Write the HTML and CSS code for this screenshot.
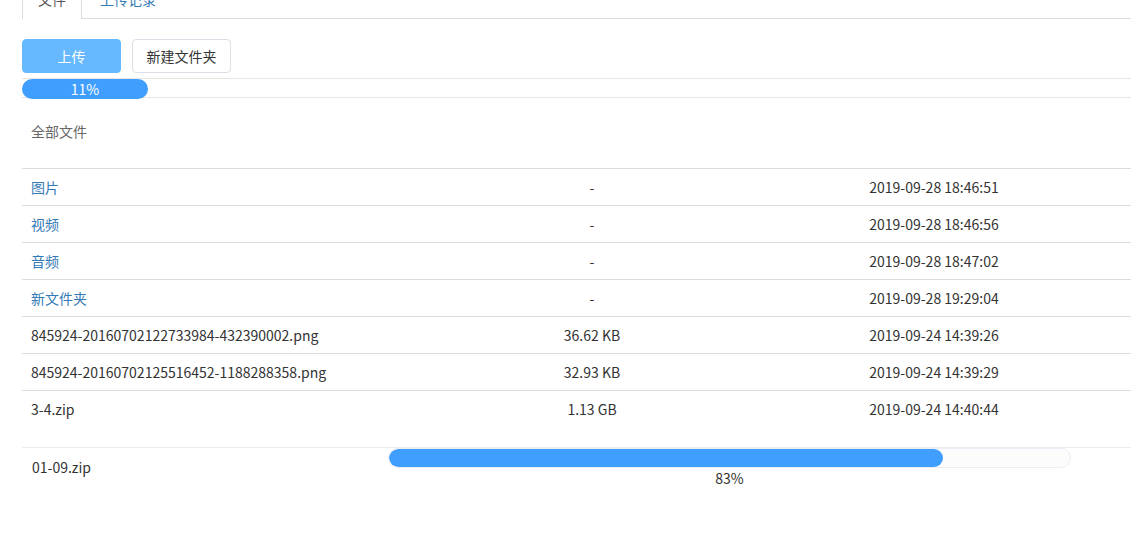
FILE: index.html
```html
<!DOCTYPE html>
<html lang="zh">
<head>
<meta charset="utf-8">
<link rel="stylesheet" href="styles.css">
</head>
<body>
<div class="page">
  <div class="tabs">
    <div class="tab active">文件</div>
    <div class="tab">上传记录</div>
  </div>
  <div class="toolbar">
    <button class="btn primary">上传</button>
    <button class="btn">新建文件夹</button>
  </div>
  <div class="total-progress">
    <div class="total-fill" style="width:126px">11%</div>
  </div>
  <div class="crumb">全部文件</div>
  <div class="list">
    <div class="row"><span class="name folder">图片</span><span class="size">-</span><span class="date">2019-09-28 18:46:51</span></div>
    <div class="row"><span class="name folder">视频</span><span class="size">-</span><span class="date">2019-09-28 18:46:56</span></div>
    <div class="row"><span class="name folder">音频</span><span class="size">-</span><span class="date">2019-09-28 18:47:02</span></div>
    <div class="row"><span class="name folder">新文件夹</span><span class="size">-</span><span class="date">2019-09-28 19:29:04</span></div>
    <div class="row"><span class="name">845924-20160702122733984-432390002.png</span><span class="size">36.62 KB</span><span class="date">2019-09-24 14:39:26</span></div>
    <div class="row"><span class="name">845924-20160702125516452-1188288358.png</span><span class="size">32.93 KB</span><span class="date">2019-09-24 14:39:29</span></div>
    <div class="row last"><span class="name">3-4.zip</span><span class="size">1.13 GB</span><span class="date">2019-09-24 14:40:44</span></div>
  </div>
  <div class="uploads">
    <div class="upload-row">
      <span class="up-name">01-09.zip</span>
      <div class="up-progress">
        <div class="track"><div class="fill" style="width:81.4%"></div></div>
        <div class="pct">83%</div>
      </div>
    </div>
  </div>
</div>
</body>
</html>
```
FILE: styles.css
```css
* { box-sizing: border-box; }
html, body { margin: 0; padding: 0; background: #fff; }
body {
  font-family: "Noto Sans CJK SC", "Noto Sans", sans-serif;
  font-size: 14px;
  color: #333;
  overflow: hidden;
}
.page {
  margin-top: -22px;
  padding-left: 22px;
}
.tabs {
  display: flex;
  height: 41px;
  border-bottom: 1px solid #ddd;
}
.tab {
  height: 41px;
  line-height: 40px;
  padding: 0 16px 0 17px;
  color: #337ab7;
  white-space: nowrap;
  border: 1px solid transparent;
  border-bottom: none;
}
.tab.active {
  color: #555;
  background: #fff;
  border-color: #ddd;
  padding: 0 15px;
}
.toolbar {
  display: flex;
  gap: 11px;
  margin-top: 20px;
}
.btn {
  width: 99px;
  height: 34px;
  border: 1px solid #dcdfe6;
  border-radius: 4px;
  background: #fff;
  font-family: inherit;
  font-size: 14px;
  color: #333;
  padding: 0;
}
.btn.primary {
  background: #66b8ff;
  border-color: #66b8ff;
  color: #fff;
}
.total-progress {
  margin-top: 5px;
  height: 20px;
  border-top: 1px solid #e6e6e6;
  border-bottom: 1px solid #e6e6e6;
}
.total-fill {
  height: 20px;
  background: #409eff;
  border-radius: 10px;
  color: #fff;
  font-size: 14px;
  line-height: 20px;
  text-align: center;
  position: relative;
}
.crumb {
  height: 70px;
  line-height: 66px;
  padding-left: 9px;
  color: #666;
}
.list {
  border-top: 1px solid #ddd;
}
.row {
  display: grid;
  grid-template-columns: 421px 298px 1fr;
  height: 37px;
  line-height: 36px;
  border-bottom: 1px solid #ddd;
}
.row.last { border-bottom: none; height: 36px; }
.name { padding-left: 9px; white-space: nowrap; }
.folder { color: #337ab7; }
.size { text-align: center; }
.date { text-align: center; padding-right: 4px; }
.uploads {
  margin-top: 20px;
  border-top: 1px solid #ebebeb;
}
.upload-row {
  display: grid;
  grid-template-columns: 366px 683px;
}
.up-name {
  padding-left: 10px;
  line-height: 38px;
}
.up-progress { padding-top: 0; }
.track {
  height: 20px;
  border: 1px solid #ebeef5;
  background: #fcfcfc;
  border-radius: 10px;
  overflow: hidden;
}
.fill {
  height: 100%;
  background: #409eff;
  border-radius: 10px;
}
.pct {
  text-align: center;
  line-height: 20px;
}
```
